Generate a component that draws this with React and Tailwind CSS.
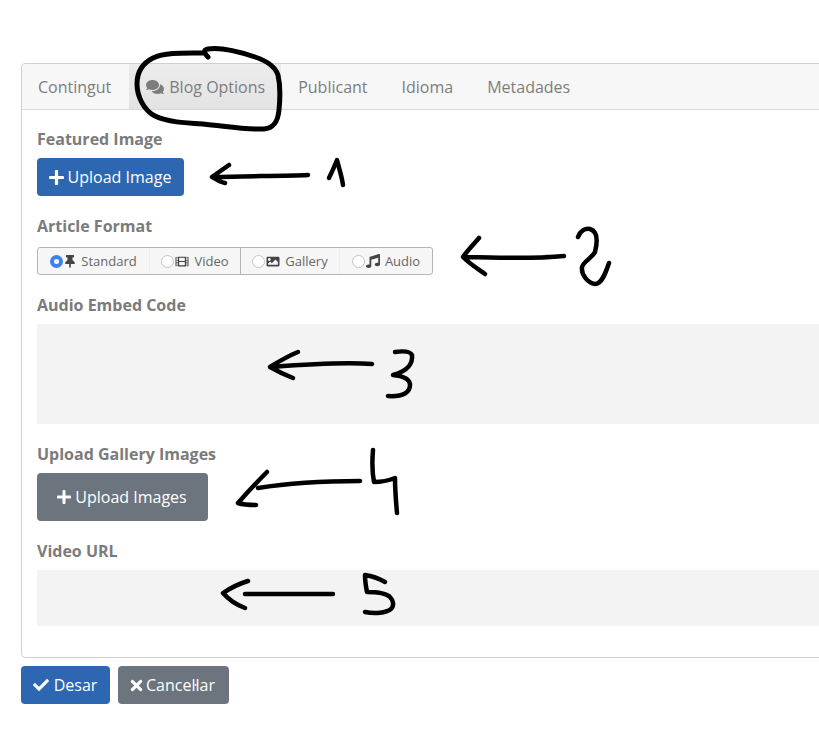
import React from "react";
import { FaComments, FaPlus, FaThumbtack, FaFilm, FaImage, FaMusic, FaCheck, FaTimes } from "react-icons/fa";

const font = { fontFamily: '"Open Sans", sans-serif' };

function Label({ children }) {
  return <div className="h-6 mb-[7px] text-base leading-6 font-bold text-[#7b7b7b]">{children}</div>;
}

function Radio({ checked }) {
  return checked ? (
    <span className="block w-[13px] h-[13px] rounded-full bg-white border-[4px] border-[#3b82f0] shrink-0" />
  ) : (
    <span className="block w-[13px] h-[13px] rounded-full bg-white border border-[#c4c4c4] shrink-0" />
  );
}

function Segment({ w, icon, label, checked, border }) {
  return (
    <div className={`flex items-center justify-center h-full ${w} ${border} text-[13px] text-[#666]`}>
      <Radio checked={checked} />
      <span className="mx-[1px] mr-[5px] text-[#444]">{icon}</span>
      <span className="pt-[1px]">{label}</span>
    </div>
  );
}

function Stroke({ d, w = "4.5" }) {
  return <path d={d} fill="none" stroke="#000" strokeWidth={w} strokeLinecap="round" strokeLinejoin="round" />;
}

function Annotations() {
  return (
    <svg className="absolute left-0 top-0 pointer-events-none" width="819" height="733" viewBox="0 0 819 733">
      <Stroke w="5" d="M208 57 C204 53 203 50 208 49 C222 47 240 52 255 57 C267 61 275 66 278 75 C281 88 280 100 279 110 C278 120 275 128 264 129 C245 130 225 126 203 124 C185 123 167 122 155 116 C143 110 137 95 137 84 C137 72 143 63 153 58 C165 52 185 53 205 53" />
      <Stroke d="M308 175 C285 176 250 176 213 177 M229 165 C222 170 216 174 212 177 C216 179 220 182 225 183" />
      <Stroke d="M329 178 C332 172 335 165 337 160 C339 168 342 177 343 185" />
      <Stroke d="M564 256 C535 259 500 258 467 257 M479 238 C473 245 467 251 463 257 C470 264 478 269 485 274" />
      <Stroke d="M578 237 C580 231 585 228 590 229 C597 231 598 240 595 252 C592 258 584 261 582 267 C581 275 588 283 595 284 C602 284 606 272 609 263" />
      <Stroke d="M372 364 C345 362 310 364 272 367 M298 352 C288 356 278 362 270 367 C277 371 285 375 293 378" />
      <Stroke d="M395 352 C402 351 410 351 412 355 C413 363 408 371 393 375 C402 376 410 379 410 385 C410 392 404 397 388 396" />
      <Stroke d="M360 481 C330 481 295 482 258 488 M267 472 C257 482 246 494 238 503 C244 505 250 505 256 505" />
      <Stroke d="M373 450 C372 462 372 472 374 482 C382 482 390 480 395 478 C395 490 396 502 397 513" />
      <Stroke d="M333 594 C305 594 275 594 245 594 M248 581 C238 584 229 589 223 593 C229 600 237 605 245 608" />
      <Stroke d="M385 582 C378 578 372 576 365 575 C365 581 366 587 367 592 C376 592 386 593 390 597 C394 601 394 606 391 609 C386 613 375 614 365 612" />
    </svg>
  );
}

export default function App() {
  return (
    <div className="relative w-[819px] h-[733px] overflow-hidden bg-white" style={font}>
      <div className="pt-[63px] pl-[21px]">
        <div className="w-[860px] h-[595px] border border-[#d0d0d0] rounded-[4px] bg-white">
          <div className="flex h-[46px] bg-[#f7f7f7] border-b border-[#d8d8d8] rounded-t-[4px] text-base text-[#7d7d7d]">
            <div className="pl-[16px] pr-[18px] flex items-center">Contingut</div>
            <div className="pl-[17px] pr-[16px] flex items-center gap-[5px] bg-linear-to-b from-[#ececec] to-[#e3e3e3]">
              <FaComments className="text-[#7d7d7d] w-[18px] h-[16px]" />
              Blog Options
            </div>
            <div className="px-[17px] flex items-center">Publicant</div>
            <div className="px-[17px] flex items-center">Idioma</div>
            <div className="px-[17px] flex items-center">Metadades</div>
          </div>
          <div className="pt-[17px] pl-[15px]">
            <Label>Featured Image</Label>
            <button className="flex items-center justify-center gap-[3px] pr-[2px] w-[147px] h-[38px] mb-[18px] rounded-[4px] bg-[#2d67b2] text-white text-base">
              <FaPlus className="w-[17px] h-[17px]" />
              Upload Image
            </button>
            <div className="h-6 mb-[9px] text-base leading-6 font-bold text-[#7b7b7b]">Article Format</div>
            <div className="flex items-center w-[396px] h-[28px] mb-[18px] border border-[#b5b5b5] rounded-[3px] bg-[#f6f6f6]">
              <Segment w="w-[112px]" border="border-r border-[#eeeeee]" icon={<FaThumbtack className="w-[12px] h-[13px]" />} label="Standard" checked />
              <Segment w="w-[91px]" border="border-r border-[#b5b5b5]" icon={<FaFilm className="w-[14px] h-[13px]" />} label="Video" />
              <Segment w="w-[99px]" border="border-r border-[#eeeeee]" icon={<FaImage className="w-[14px] h-[13px]" />} label="Gallery" />
              <Segment w="w-[92px]" border="" icon={<FaMusic className="w-[14px] h-[14px]" />} label="Audio" />
            </div>
            <Label>Audio Embed Code</Label>
            <div className="h-[100px] mb-[18px] bg-[#f3f3f3]" />
            <Label>Upload Gallery Images</Label>
            <button className="flex items-center justify-center gap-[3px] pr-[2px] w-[171px] h-[48px] mb-[18px] rounded-[4px] bg-[#6c757d] text-white text-base">
              <FaPlus className="w-[16px] h-[16px]" />
              Upload Images
            </button>
            <Label>Video URL</Label>
            <div className="h-[56px] bg-[#f3f3f3]" />
          </div>
        </div>
        <div className="flex gap-2 mt-2">
          <button className="flex items-center justify-center gap-[4px] pr-[2px] w-[89px] h-[38px] rounded-[4px] bg-[#2d67b2] text-white text-base">
            <FaCheck className="w-[18px] h-[16px]" />
            Desar
          </button>
          <button className="flex items-center justify-center gap-[2px] pr-[3px] w-[111px] h-[38px] rounded-[4px] bg-[#6c757d] text-white text-base">
            <FaTimes className="w-[15px] h-[17px]" />
            Canceŀlar
          </button>
        </div>
      </div>
      <Annotations />
    </div>
  );
}
